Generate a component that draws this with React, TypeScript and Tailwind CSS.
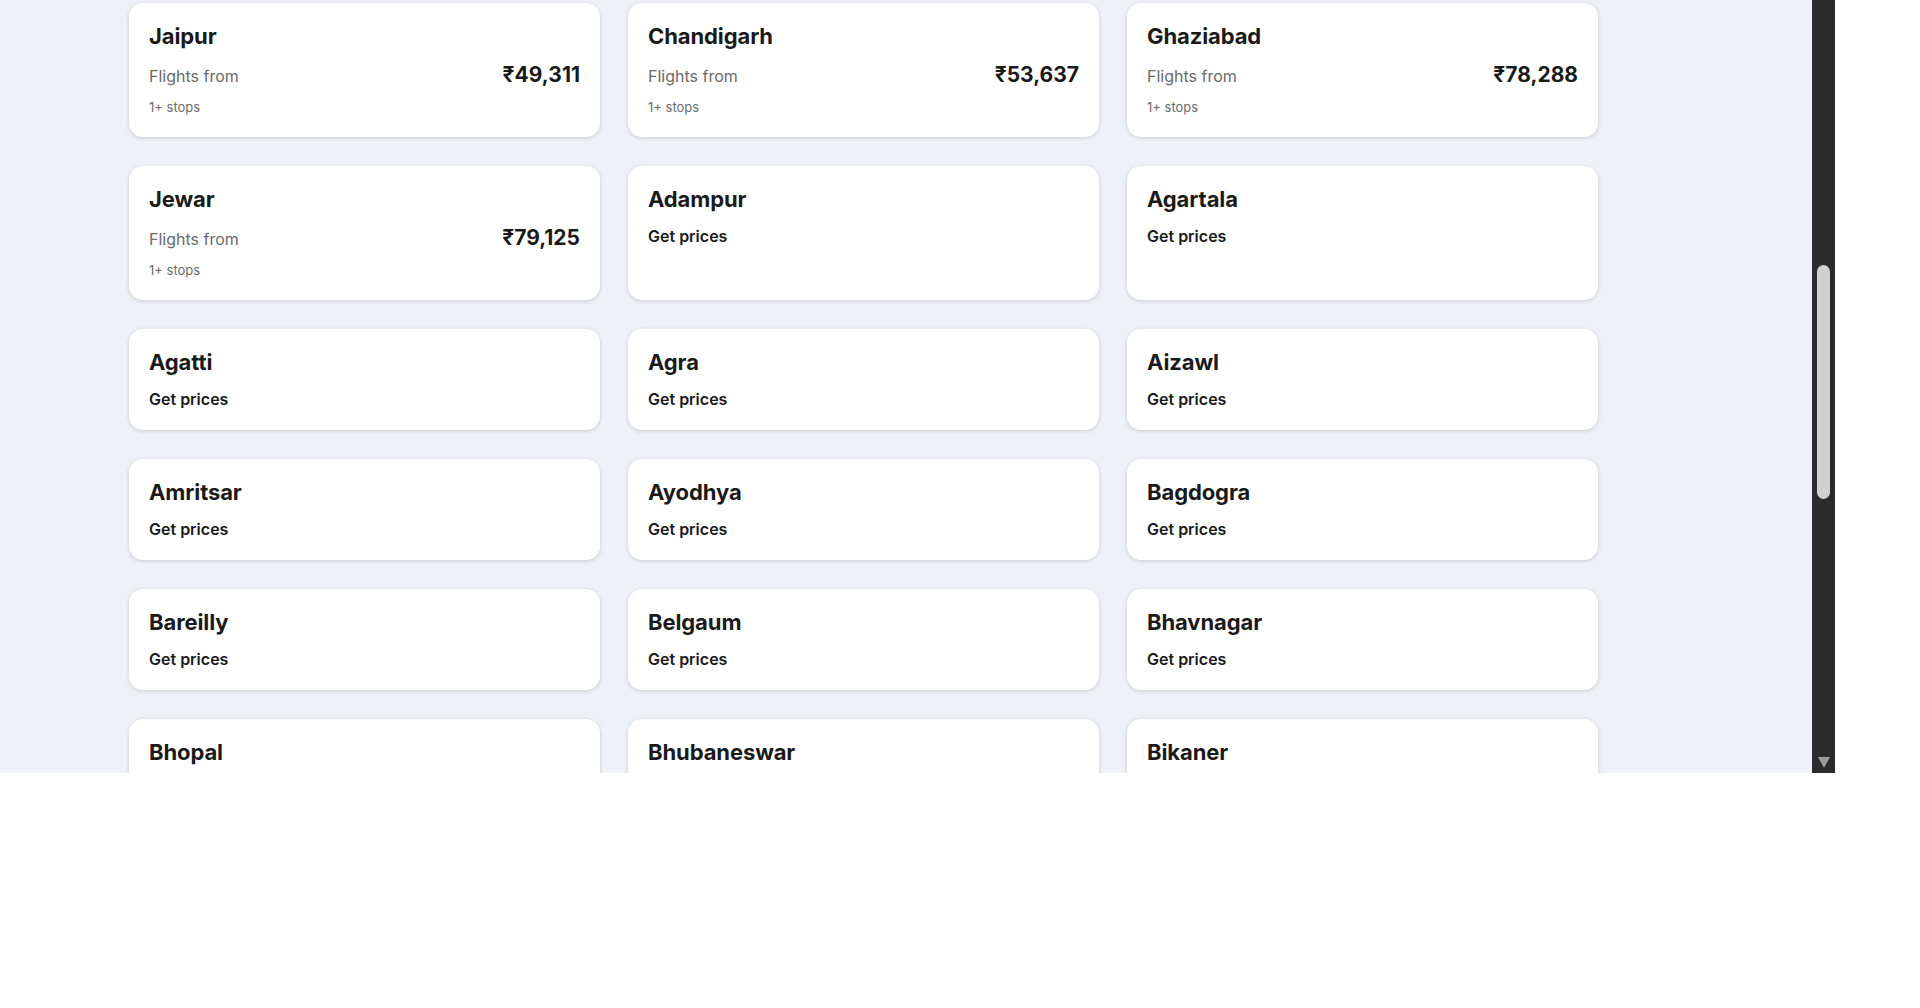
import React from 'react';

interface Destination {
    city: string,
    price?: string
}

const destinations: Destination[] = [
    { city: "Jaipur", price: "₹49,311" },
    { city: "Chandigarh", price: "₹53,637" },
    { city: "Ghaziabad", price: "₹78,288" },
    { city: "Jewar", price: "₹79,125" },
    { city: "Adampur" },
    { city: "Agartala" },
    { city: "Agatti" },
    { city: "Agra" },
    { city: "Aizawl" },
    { city: "Amritsar" },
    { city: "Ayodhya" },
    { city: "Bagdogra" },
    { city: "Bareilly" },
    { city: "Belgaum" },
    { city: "Bhavnagar" },
    { city: "Bhopal" },
    { city: "Bhubaneswar" },
    { city: "Bikaner" },
];

const DestinationCard = ({ city, price }: Destination) => {
    return (
        <div className="flex flex-col bg-white rounded-[14px] px-5 pt-[19px] shadow-[0_1px_4px_rgba(0,0,0,0.16)]">
            <h3 className="text-[22px] leading-7 font-bold text-[#1a1a1a] tracking-[-0.1px]">{city}</h3>
            {price ? (
                <>
                    <div className="flex h-6 items-baseline justify-between mt-[13px] leading-6">
                        <span className="text-[16px] text-[#6a6a6a]">Flights from</span>
                        <span className="text-[21px] font-bold text-[#1a1a1a]">{price}</span>
                    </div>
                    <span className="mt-[10px] pb-[20px] text-[13px] leading-5 text-[#6a6a6a]">1+ stops</span>
                </>
            ) : (
                <span className="mt-[11px] pb-[19px] text-[16px] leading-6 font-semibold text-[#1a1a1a]">Get prices</span>
            )}
        </div>
    )
}

const App = () => {
    return (
        <div className="w-full h-[1008px] bg-white font-['Inter','Noto_Sans',sans-serif]">
            <div className="flex w-[1835px] h-[773px]">
                <main className="w-[1812px] h-full overflow-hidden bg-[#eef1f5] pt-[3px] pl-[129px]">
                    <div className="grid grid-cols-[repeat(3,471px)] gap-x-[28px] gap-y-[29px]">
                        {destinations.map((d) => (
                            <DestinationCard key={d.city} {...d} />
                        ))}
                    </div>
                </main>
                {/* scrollbar */}
                <div className="w-[23px] h-full bg-[#2b2b2b] flex flex-col items-center">
                    <div className="mt-[265px] w-[13px] h-[234px] rounded-full bg-[#d0d0d0]"></div>
                    <div className="mt-auto mb-[5px] w-0 h-0 border-l-[6.5px] border-r-[6.5px] border-t-[11px] border-l-transparent border-r-transparent border-t-[#9a9a9a]"></div>
                </div>
            </div>
        </div>
    )
}

export default App;
